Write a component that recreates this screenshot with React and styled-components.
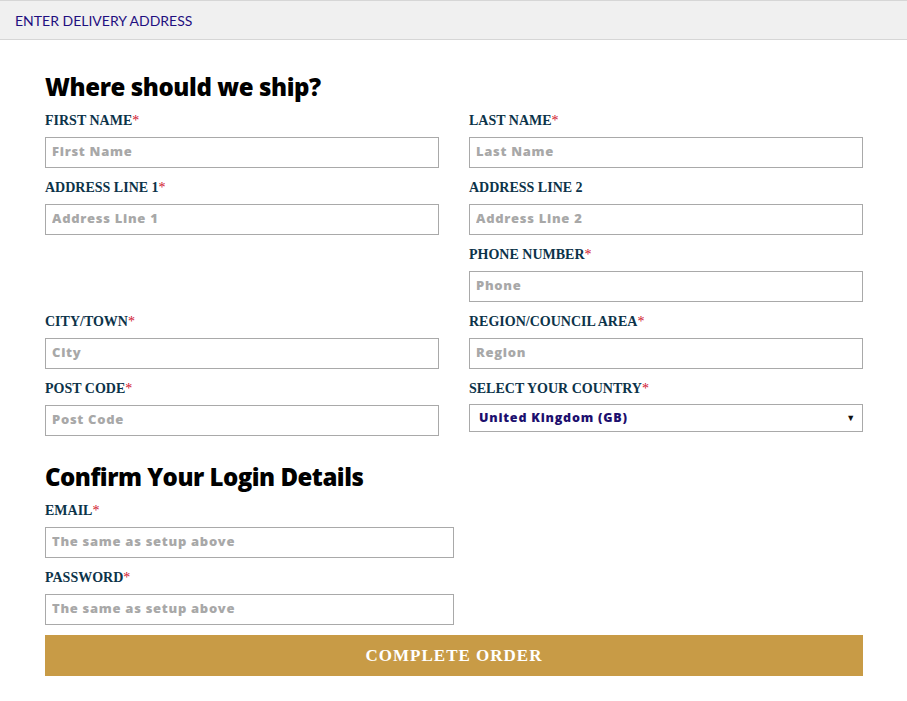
import React from 'react';
import styled, {createGlobalStyle} from 'styled-components';

const GlobalStyle = createGlobalStyle`
body{
    margin:0;
    background:#fff;
    font-family:"Open Sans", sans-serif;
}
`

const TopBar = styled.div`
height:38px;
display:flex;
align-items:center;
padding:0 15px;
background:#f0f0f0;
border-top:1px solid #d6d6d6;
border-bottom:1px solid #d6d6d6;
color:#1f0f80;
font-family:"Lato", sans-serif;
font-size:14px;
`

const Form = styled.form`
width:818px;
margin:0 0 0 45px;
padding-top:33px;
`

const Heading = styled.h2`
margin:${props=>props.second ? '27px' : '0'} 0 12px;
font-family:"Open Sans", sans-serif;
font-weight:800;
font-size:24px;
line-height:28px;
letter-spacing:${props=>props.second ? '-0.5px' : '-0.4px'};
color:#000;
`

const Grid = styled.div`
display:grid;
grid-template-columns:394px 394px;
column-gap:30px;
row-gap:12px;
`

const Field = styled.div`
display:flex;
flex-direction:column;
width:${props=>props.wide ? '409px' : 'auto'};
margin-bottom:${props=>props.stack ? '12px' : '0'};
`

const Label = styled.label`
font-family:"Liberation Serif", serif;
font-weight:bold;
font-size:14px;
line-height:16px;
color:#0c3349;
margin-bottom:8px;
span{
    color:#d0112b;
    font-weight:normal;
}
`

const Input = styled.input`
box-sizing:border-box;
height:31px;
width:100%;
border:1px solid #a9a9a9;
padding:0 6px 3px;
font-family:"Open Sans", sans-serif;
font-weight:800;
font-size:13px;
letter-spacing:0.7px;
color:#333;
outline:none;
&::placeholder{
    color:#a8a8a8;
}
`

const Select = styled.div`
box-sizing:border-box;
height:28px;
margin-top:-1px;
border:1px solid #a9a9a9;
display:flex;
align-items:center;
justify-content:space-between;
padding:0 6px 2px 9px;
font-family:"Open Sans", sans-serif;
font-weight:800;
font-size:12.5px;
letter-spacing:0.8px;
color:#1c0f6e;
small{
    font-size:9px;
    color:#111;
}
`

const Button = styled.button`
width:100%;
height:41px;
margin-top:-2px;
border:none;
background:#c89b46;
color:#fff;
font-family:"Liberation Serif", serif;
font-weight:bold;
font-size:17px;
letter-spacing:1px;
`

const Req = () => <span>*</span>

const shipping = [
    {label:'FIRST NAME', req:true, ph:'First Name'},
    {label:'LAST NAME', req:true, ph:'Last Name'},
    {label:'ADDRESS LINE 1', req:true, ph:'Address Line 1'},
    {label:'ADDRESS LINE 2', ph:'Address Line 2'},
    null,
    {label:'PHONE NUMBER', req:true, ph:'Phone'},
    {label:'CITY/TOWN', req:true, ph:'City'},
    {label:'REGION/COUNCIL AREA', req:true, ph:'Region'},
    {label:'POST CODE', req:true, ph:'Post Code'},
]

const App = () => {
    return (
        <>
            <GlobalStyle/>
            <TopBar>ENTER DELIVERY ADDRESS</TopBar>
            <Form onSubmit={e=>e.preventDefault()}>
                <Heading>Where should we ship?</Heading>
                <Grid>
                    {shipping.map((f, i)=> f ? (
                        <Field key={i}>
                            <Label>{f.label}{f.req && <Req/>}</Label>
                            <Input placeholder={f.ph}/>
                        </Field>
                    ) : <div key={i}/>)}
                    <Field>
                        <Label>SELECT YOUR COUNTRY<Req/></Label>
                        <Select>United Kingdom (GB)<small>▼</small></Select>
                    </Field>
                </Grid>
                <Heading second>Confirm Your Login Details</Heading>
                <Field wide stack>
                    <Label>EMAIL<Req/></Label>
                    <Input placeholder="The same as setup above"/>
                </Field>
                <Field wide stack>
                    <Label>PASSWORD<Req/></Label>
                    <Input type="password" placeholder="The same as setup above"/>
                </Field>
                <Button type="submit">COMPLETE ORDER</Button>
            </Form>
        </>
    )
};
export default App
